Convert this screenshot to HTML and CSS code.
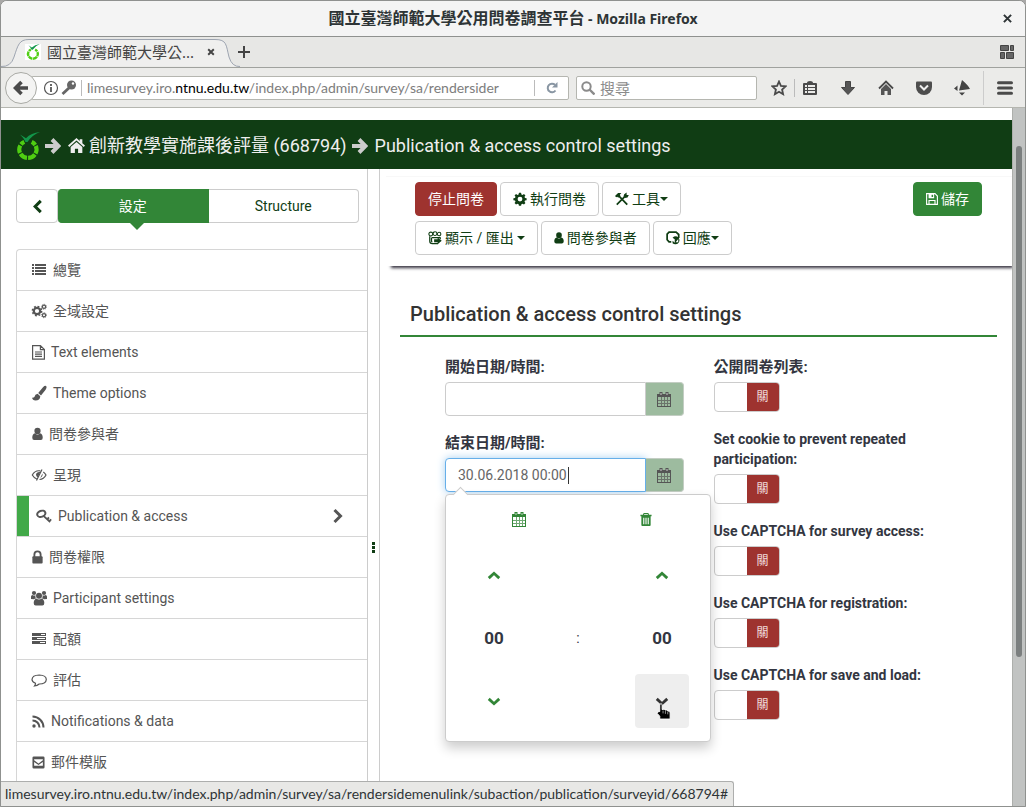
FILE: index.html
```html
<!DOCTYPE html>
<html lang="zh-Hant">
<head>
<meta charset="utf-8">
<meta name="viewport" content="width=device-width, initial-scale=1">
<title>國立臺灣師範大學公用問卷調查平台</title>
<link rel="stylesheet" href="styles.css">
</head>
<body>
<svg class="defs" aria-hidden="true">
  <symbol id="lime" viewBox="0 0 24 28">
    <g fill="none" stroke="#4fce12" stroke-width="4.200">
      <path d="M8.300 9.900A8.600 8.600 0 0 0 5 12.400"/><path d="M4.300 13.400A8.600 8.600 0 0 0 4 20.900"/><path d="M4.600 21.800A8.600 8.600 0 0 0 11 25.800"/><path d="M12.100 25.900A8.600 8.600 0 0 0 18.900 22.400"/><path d="M19.500 21.500A8.600 8.600 0 0 0 19.800 13.900"/><path d="M19.200 13A8.600 8.600 0 0 0 15.700 9.900"/>
    </g>
    <path fill="#12964a" d="M4 2.400L10 6.200Q15 1 24 0 16 3 11.500 10L9.500 10Q8 6 4 2.400Z"/>
  </symbol>
  <symbol id="arrow" viewBox="0 0 16 16"><path fill="none" stroke="currentColor" stroke-width="4" d="M0 8H12M7 1.500L13.500 8L7 14.500"/></symbol>
  <symbol id="home" viewBox="0 0 16 16"><path fill="currentColor" d="M8 1L0 8l1.200 1.300L8 3.400l6.800 5.900L16 8l-2.500-2.200V2H11v1.700zM8 4.800L2.500 9.500V15H6.500v-4h3v4h4V9.500z"/></symbol>
  <symbol id="left" viewBox="0 0 16 16"><path fill="none" stroke="currentColor" stroke-width="3.200" d="M11.500 2L5.500 8l6 6"/></symbol>
  <symbol id="right" viewBox="0 0 16 16"><path fill="none" stroke="currentColor" stroke-width="3" d="M4.500 2L10.500 8l-6 6"/></symbol>
  <symbol id="up" viewBox="0 0 16 16"><path fill="none" stroke="currentColor" stroke-width="3.200" d="M2 11L8 5.500L14 11"/></symbol>
  <symbol id="down" viewBox="0 0 16 16"><path fill="none" stroke="currentColor" stroke-width="3.200" d="M2 5L8 10.500L14 5"/></symbol>
  <symbol id="list" viewBox="0 0 16 16"><path fill="currentColor" d="M1 2h2v2H1zM4 2h11v2H4zM1 5h2v2H1zM4 5h11v2H4zM1 8h2v2H1zM4 8h11v2H4zM1 11h2v2H1zM4 11h11v2H4z"/></symbol>
  <symbol id="cog" viewBox="-1 -1 18 18"><path fill="currentColor" fill-rule="evenodd" d="M6.600 0h2.800l.4 2.100 1.500.6 1.800-1.200 1.900 1.900-1.200 1.800.6 1.500 2.100.4v2.500l-2.100.4-.6 1.500 1.200 1.800-1.900 1.900-1.800-1.200-1.500.6-.4 2H6.600l-.4-2-1.500-.6-1.800 1.200L1 13.300l1.200-1.800L1.600 10-.5 9.600V7.100l2.100-.4.6-1.500L1 3.400l1.900-1.900 1.800 1.200 1.500-.6zM8 5a3 3 0 1 0 0 6.200A3 3 0 0 0 8 5z"/></symbol>
  <symbol id="cogs" viewBox="0 0 16 16"><g fill="none" stroke="currentColor"><circle cx="6" cy="8" r="3.200" stroke-width="2.200"/><circle cx="6" cy="8" r="4.700" stroke-width="1.400" stroke-dasharray="1.900 1.790"/><circle cx="13" cy="3.800" r="1.600" stroke-width="1.200"/><circle cx="13" cy="3.800" r="2.500" stroke-width=".8" stroke-dasharray="1 .96"/><circle cx="13" cy="12.200" r="1.600" stroke-width="1.200"/><circle cx="13" cy="12.200" r="2.500" stroke-width=".8" stroke-dasharray="1 .96"/></g></symbol>
  <symbol id="file" viewBox="1 1 13 15"><path fill="none" stroke="currentColor" stroke-width="1.200" d="M1.600 1.600h7.800l4 4v9.600H1.600zM9.400 1.600v4h4M4 8h7M4 10.200h7M4 12.400h7"/></symbol>
  <symbol id="brush" viewBox="0 0 16 16"><path fill="currentColor" d="M15 1q1.300 1-.4 3.700L10 10.500 7.200 8 12 2.300Q14 .3 15 1zM6.600 8.700l2.700 2.500Q9 15.500 4.500 15.500 1.500 15.300 1 12.500q1 .8 2.400-.5.600-2.800 3.200-3.300z"/></symbol>
  <symbol id="user" viewBox="2 1 12 14"><path fill="currentColor" d="M8 1.200a3.400 3.400 0 1 1 0 6.800 3.400 3.400 0 0 1 0-6.800zM5.200 7.300Q2.300 8 2.300 12q0 2.500 2 2.500h7.400q2 0 2-2.500 0-4-2.900-4.700Q8 10 5.200 7.300z"/></symbol>
  <symbol id="eye" viewBox="0 0 16 16"><path fill="none" stroke="currentColor" stroke-width="1.200" d="M9.300 3.900Q4 3 1.300 8 3 11 5.800 12M12.300 5Q14 6.200 15 8 12.800 12.300 8.500 12.500M11 2.500L5.500 13.500"/><path fill="currentColor" d="M9.300 5Q5.500 4.500 5 7.500 5 9.500 6.800 10.300zM11.500 6.500q.6 3-2.300 4.400z"/></symbol>
  <symbol id="key" viewBox="0 0 16 16"><ellipse cx="5.300" cy="5.800" rx="4.200" ry="3" transform="rotate(-20 5.300 5.800)" fill="none" stroke="currentColor" stroke-width="2"/><path fill="none" stroke="currentColor" stroke-width="1.800" d="M7.500 7.800L14.200 14M10.800 11.500l2.200-2M13 13.400l2.200-2"/></symbol>
  <symbol id="lock" viewBox="2 0 12 15"><path fill="none" stroke="currentColor" stroke-width="2" d="M4.600 8V4.800a3.400 3.400 0 0 1 6.800 0V8"/><rect x="2.400" y="6.800" width="11.200" height="7.700" rx="1" fill="currentColor"/></symbol>
  <symbol id="users" viewBox="0 0 16 16"><g fill="currentColor"><circle cx="3" cy="3" r="2.100"/><circle cx="13" cy="3" r="2.100"/><path d="M0 9V6.500Q.2 5 1.500 5q1.500 1 3 .2Q4 7 5 8.500q-1.500 0-2 .8zM16 9V6.500Q15.800 5 14.500 5q-1.500 1-3 .2.500 1.800-.5 3.300 1.500 0 2 .8z"/><circle cx="8" cy="5.700" r="3"/><path d="M5.200 8.500q2.800 2 5.600 0Q13.300 9.500 13.300 13q0 2.500-2 2.500H4.700q-2 0-2-2.500 0-3.500 2.500-4.500z"/></g></symbol>
  <symbol id="tasks" viewBox="0 0 16 16"><path fill="currentColor" fill-rule="evenodd" d="M1 2h14v3H1zM10 3h4v1h-4zM1 6h14v3H1zM6 7h8v1H6zM1 10h14v3H1zM9 11h5v1H9z"/></symbol>
  <symbol id="chat" viewBox="0 0 16 16"><path fill="none" stroke="currentColor" stroke-width="1.200" d="M8.200 3Q15.300 3.300 15.300 7.500 15 12 8.200 12q-2 1.800-4.700 2 1.200-1.500 1-2.800Q1 10 1 7.500 1.300 3.200 8.200 3z"/></symbol>
  <symbol id="rss" viewBox="1 1 13 14"><circle cx="3" cy="12.500" r="1.700" fill="currentColor"/><path fill="none" stroke="currentColor" stroke-width="2" d="M1.500 7a7 7 0 0 1 7 7M1.500 3a11 11 0 0 1 11 11"/></symbol>
  <symbol id="mail" viewBox="1 1 14 14"><path fill="currentColor" fill-rule="evenodd" d="M3 1.500h10q1.500 0 1.500 1.500v10q0 1.500-1.500 1.500H3q-1.500 0-1.500-1.500V3Q1.500 1.500 3 1.500zM3.300 4.500v1.200L8 9l4.700-3.300V4.500zM3.300 7.500v4h9.400v-4L8 10.700z"/></symbol>
  <symbol id="tools" viewBox="0 0 16 16"><path fill="none" stroke="currentColor" stroke-width="2" d="M3.500 3.500L14 14.500M12 4.500L2 14.500"/><path fill="currentColor" d="M0 4.500L3.500 1h3.800L5.500 3 6.200 4 3.800 6.500 2.500 5.400 1.400 6zM10.500 2.500L13.300.5v2.800l2.500.2-1.500 2.700-3 .6-1.500-2z"/></symbol>
  <symbol id="export" viewBox="0 0 16 16"><path fill="none" stroke="currentColor" stroke-width="1.400" d="M2 6v5.500q0 3 3 3h6.500M4 8v3.500q0 .8 1 .8M4 7.500h10M14 7v2.500"/><g fill="none" stroke="currentColor" stroke-width="1.200"><circle cx="3.200" cy="3.500" r="2.200"/><circle cx="8" cy="3" r="2.200"/><circle cx="12.700" cy="3.500" r="2"/></g><path fill="currentColor" d="M7 9.500h4V7.300l4.700 3.900-4.700 3.900v-2.300H7z"/></symbol>
  <symbol id="answers" viewBox="0 0 16 16"><path fill="none" stroke="currentColor" stroke-width="2" d="M6 12.500H3.500L1.300 10V3.500L3.500 1.300h8L14.500 4v4"/><path fill="currentColor" fill-rule="evenodd" d="M12.500 6.200a4.700 4.700 0 1 1-5 7.800V11l2.500 2.500V9.300L7.500 7.700q2-2 5-1.500zM11 12.800h3V9z"/></symbol>
  <symbol id="save" viewBox="1 1 14 14"><path fill="none" stroke="currentColor" stroke-width="1.300" d="M1.700 1.700h9.800l2.800 2.800v9.800H1.700zM4.500 14V9.700h7V14"/><path fill="currentColor" fill-rule="evenodd" d="M4 2h6.500v5H4zM7.500 3h1.800v2.800H7.500z"/></symbol>
  <symbol id="calendar" viewBox="0 0 14 15"><g fill="currentColor"><path fill-rule="evenodd" d="M0 2h14v13H0zM1 5v9h12V5z"/><path opacity=".7" d="M4 5h1v9H4zM7 5h1v9H7zM10 5h1v9h-1zM1 8h12v1H1zM1 11h12v1H1z"/><path d="M2.500 0h3v3h-3zM8.500 0h3v3h-3z"/></g><path stroke="#fff" opacity=".7" d="M4 1v2M10 1v2"/></symbol>
  <symbol id="trash" viewBox="2 1 12 14"><path fill="currentColor" fill-rule="evenodd" d="M5.500 1h5l.8 2H14v1.500h-1V14q0 1-1 1H4q-1 0-1-1V4.500H2V3h2.700zM6.200 2l-.4 1h4.400l-.4-1zM5 6v7h1.200V6zm2.400 0v7h1.200V6zm2.400 0v7H11V6z"/></symbol>
</svg>

<div class="window">
  <header class="titlebar">
    <h1 class="wtitle"><span class="wtitle-cjk">國立臺灣師範大學公用問卷調查平台</span> - Mozilla Firefox</h1>
    <button class="wclose" aria-label="關閉視窗"><svg viewBox="0 0 10 10"><path stroke="#2e3436" stroke-width="2.200" d="M1 1l8 8M9 1l-8 8"/></svg></button>
  </header>

  <div class="tabstrip">
    <svg class="tabshape" viewBox="0 0 240 31" aria-hidden="true"><path fill="#efefee" stroke="#9da4b0" d="M0 29.500Q10 30 13 20C17 8 18 2.500 28 2.500H214C226 2.500 225 8 228 20Q231 30 239 29.500"/></svg>
    <div class="tab">
      <svg class="favicon"><use href="#lime"/></svg>
      <span class="tabtext">國立臺灣師範大學公...</span>
      <button class="tabclose" aria-label="關閉分頁"><svg viewBox="0 0 10 10"><path stroke="#444" stroke-width="2.400" d="M1.500 1.500l7 7M8.500 1.500l-7 7"/></svg></button>
    </div>
    <button class="newtab" aria-label="新分頁"><svg viewBox="0 0 12 12"><path stroke="#444" stroke-width="2" d="M6 0v12M0 6h12"/></svg></button>
    <svg class="groups" viewBox="0 0 14 14"><path fill="#666" stroke="#444" d="M.5.500h8v5h-8zM10.500.500h3v5h-3zM.5 7.500h4v6h-4zM6.500 7.500h7v6h-7z"/></svg>
  </div>

  <nav class="navbar">
    <button class="back" aria-label="上一頁"><svg viewBox="0 0 16 16"><path fill="none" stroke="#4a4a4a" stroke-width="3.600" d="M15 8H3M8.500 2L2.500 8l6 6"/></svg></button>
    <div class="urlbox">
      <svg class="nav-small" viewBox="0 0 16 16"><circle cx="8" cy="8" r="6.500" fill="none" stroke="#555" stroke-width="1.200"/><path stroke="#555" stroke-width="1.800" d="M8 7v5M8 4v2"/></svg>
      <svg class="nav-small" viewBox="0 0 16 16"><circle cx="10.500" cy="5" r="4.500" fill="#666"/><circle cx="12" cy="3.500" r="1.200" fill="#fff"/><path stroke="#666" stroke-width="2.800" d="M9 7l-7.500 7"/></svg>
      <span class="url">limesurvey.iro.<b>ntnu.edu.tw</b>/index.php/admin/survey/sa/rendersider</span>
      <button class="reload" aria-label="重新載入"><svg viewBox="0 0 12 12"><path fill="none" stroke="#8996a3" stroke-width="2" d="M9.500 8.500A4.300 4.300 0 1 1 9 2.800"/><path fill="#8996a3" d="M11.500 0v5.500H6z"/></svg></button>
    </div>
    <label class="searchbox"><svg viewBox="0 0 14 14"><circle cx="5.500" cy="5.500" r="4.200" fill="none" stroke="#8b8b8b" stroke-width="2"/><path stroke="#8b8b8b" stroke-width="2.400" d="M8.500 8.500l5 5"/></svg><input type="search" placeholder="搜尋" aria-label="搜尋"></label>
    <div class="navicons">
      <button aria-label="書籤"><svg viewBox="0 0 16 16"><path fill="none" stroke="#4a4a4a" stroke-width="1.800" d="M8 1.500l1.900 4.300 4.700.5-3.500 3.200 1 4.700L8 11.800l-4.100 2.400 1-4.700L1.400 6.300l4.700-.5z"/></svg></button>
      <button class="ruled" aria-label="書籤選單"><svg viewBox="0 0 16 16"><path fill="#4a4a4a" fill-rule="evenodd" d="M5 3q0-2 3-2t3 2h3q1 0 1 1v10q0 1-1 1H2q-1 0-1-1V4q0-1 1-1zM3 5v2h2V5zm3 0v2h7V5zM3 8v2h2V8zm3 0v2h7V8zm-3 3v2h2v-2zm3 0v2h7v-2z"/></svg></button>
      <button aria-label="下載"><svg viewBox="0 0 16 16"><path fill="#555" stroke="#444" d="M5.500 1.500h5v6h4L8 14.500 1.500 7.500h4z"/></svg></button>
      <button aria-label="首頁"><svg viewBox="0 0 16 16"><path fill="none" stroke="#4a4a4a" stroke-width="1.800" d="M1 8.500l7-7 7 7"/><path fill="#555" d="M3 9l5-5 5 5v6H9.500v-4h-3v4H3z"/></svg></button>
      <button aria-label="Pocket"><svg viewBox="0 0 16 16"><path fill="#4d4d4d" d="M1 1.500h14q1 0 1 1V7a8 8 0 0 1-16 0V2.500q0-1 1-1z"/><path fill="none" stroke="#eee" stroke-width="2" d="M4 5.500l4 4 4-4"/></svg></button>
      <button aria-label="擴充套件"><svg viewBox="0 0 16 16"><path fill="#444" d="M8 0L5 10.500 16 9Q14 5 8 0zM3.500 5.500v5.500L0 8.500zM5 12.500h6l-3 3z"/></svg></button>
      <button class="menu" aria-label="選單"><svg viewBox="0 0 16 14"><path stroke="#4a4a4a" stroke-width="3" stroke-linecap="round" d="M1.500 1.800h13M1.500 7h13M1.500 12.200h13"/></svg></button>
    </div>
  </nav>

  <div class="viewport">
    <div class="page">
      <div class="crumbs">
        <svg class="logo"><use href="#lime"/></svg>
        <svg class="crumb-arrow"><use href="#arrow"/></svg>
        <a href="#" class="crumb"><svg><use href="#home"/></svg>創新教學實施課後評量 (668794)</a>
        <svg class="crumb-arrow"><use href="#arrow"/></svg>
        <span class="crumb">Publication &amp; access control settings</span>
      </div>

      <div class="content">
        <aside class="sidebar">
          <div class="sidetabs">
            <button class="collapse" aria-label="收合"><svg class="ic"><use href="#left"/></svg></button>
            <div class="pair"><button class="on">設定</button><button>Structure</button></div>
          </div>
          <ul class="menu-list">
            <li><a href="#"><svg class="ic"><use href="#list"/></svg>總覽</a></li>
            <li><a href="#"><svg class="ic"><use href="#cogs"/></svg>全域設定</a></li>
            <li><a href="#"><svg class="ic n"><use href="#file"/></svg>Text elements</a></li>
            <li><a href="#"><svg class="ic"><use href="#brush"/></svg>Theme options</a></li>
            <li><a href="#"><svg class="ic xn"><use href="#user"/></svg>問卷參與者</a></li>
            <li><a href="#"><svg class="ic"><use href="#eye"/></svg>呈現</a></li>
            <li><a href="#" class="current"><svg class="ic"><use href="#key"/></svg>Publication &amp; access<svg class="ic chev"><use href="#right"/></svg></a></li>
            <li><a href="#"><svg class="ic xn"><use href="#lock"/></svg>問卷權限</a></li>
            <li><a href="#"><svg class="ic"><use href="#users"/></svg>Participant settings</a></li>
            <li><a href="#"><svg class="ic"><use href="#tasks"/></svg>配額</a></li>
            <li><a href="#"><svg class="ic"><use href="#chat"/></svg>評估</a></li>
            <li><a href="#"><svg class="ic n"><use href="#rss"/></svg>Notifications &amp; data</a></li>
            <li><a href="#"><svg class="ic n"><use href="#mail"/></svg>郵件模版</a></li>
          </ul>
        </aside>
        <div class="splitter"><i></i><i></i><i></i></div>

        <main class="main">
          <div class="actions">
            <div class="btns">
              <button class="btn danger">停止問卷</button>
              <button class="btn"><svg class="ic"><use href="#cog"/></svg>執行問卷</button>
              <button class="btn"><svg class="ic"><use href="#tools"/></svg>工具<i class="caret"></i></button>
              <button class="btn"><svg class="ic"><use href="#export"/></svg>顯示 / 匯出<i class="caret spaced"></i></button>
              <button class="btn"><svg class="ic person"><use href="#user"/></svg>問卷參與者</button>
              <button class="btn"><svg class="ic"><use href="#answers"/></svg>回應<i class="caret"></i></button>
            </div>
            <button class="btn success"><svg class="ic disk"><use href="#save"/></svg>儲存</button>
          </div>

          <section class="settings">
            <h2>Publication &amp; access control settings</h2>
            <form class="cols">
              <div class="col">
                <div class="field">
                  <label class="cjk" for="start">開始日期/時間:</label>
                  <div class="date"><input id="start" type="text"><button type="button" aria-label="選擇開始日期"><svg><use href="#calendar"/></svg></button></div>
                </div>
                <div class="field">
                  <label class="cjk" for="end">結束日期/時間:</label>
                  <div class="date active"><input id="end" type="text" value="30.06.2018 00:00"><span class="textcaret"></span><button type="button" aria-label="選擇結束日期"><svg><use href="#calendar"/></svg></button>
                    <div class="picker">
                      <div class="picker-top"><button type="button" aria-label="日曆"><svg><use href="#calendar"/></svg></button><button type="button" aria-label="清除"><svg class="trash"><use href="#trash"/></svg></button></div>
                      <div class="clock">
                        <button type="button" aria-label="增加小時"><svg><use href="#up"/></svg></button><span></span><button type="button" aria-label="增加分鐘"><svg><use href="#up"/></svg></button>
                        <b>00</b><span>:</span><b>00</b>
                        <button type="button" aria-label="減少小時"><svg><use href="#down"/></svg></button><span></span><button type="button" class="hover" aria-label="減少分鐘"><svg><use href="#down"/></svg>
                          <svg class="hand" viewBox="0 0 16 18"><path fill="#000" stroke="#fff" d="M3.500 9V1.500q1.500-1.500 2.500 0V7l2-.5 1 1 2-.2 1 1.200 2 .3.500 1.700v6.500h-11V14L.8 11Q.3 9 3.500 9z"/><path stroke="#bbb" stroke-width=".8" d="M7 8v3M9.500 8.500v3M12 9v3"/></svg></button>
                      </div>
                    </div>
                  </div>
                </div>
              </div>
              <div class="col">
                <div class="field"><label class="cjk" for="s1">公開問卷列表:</label><span class="switch"><input id="s1" type="checkbox"><span>關</span></span></div>
                <div class="field"><label for="s2">Set cookie to prevent repeated participation:</label><span class="switch"><input id="s2" type="checkbox"><span>關</span></span></div>
                <div class="field"><label for="s3">Use CAPTCHA for survey access:</label><span class="switch"><input id="s3" type="checkbox"><span>關</span></span></div>
                <div class="field"><label for="s4">Use CAPTCHA for registration:</label><span class="switch"><input id="s4" type="checkbox"><span>關</span></span></div>
                <div class="field"><label for="s5">Use CAPTCHA for save and load:</label><span class="switch"><input id="s5" type="checkbox"><span>關</span></span></div>
              </div>
            </form>
          </section>
        </main>
      </div>
    </div>
    <div class="scrollbar"><div class="thumb"></div></div>
    <div class="status">limesurvey.iro.ntnu.edu.tw/index.php/admin/survey/sa/rendersidemenulink/subaction/publication/surveyid/668794#</div>
  </div>
</div>
</body>
</html>
```

FILE: styles.css
```css
* { box-sizing: border-box; }
body {
  margin: 0;
  height: 100vh;
  overflow: hidden;
  background: #a9a8a7;
  font: 14px/20px Roboto, "Noto Sans CJK TC", sans-serif;
  color: #333641;
}
button { font: inherit; color: inherit; background: none; border: 0; padding: 0; margin: 0; cursor: pointer; }
a { color: inherit; text-decoration: none; }
svg { display: block; flex: none; }
.defs { position: absolute; width: 0; height: 0; }
.ic { width: 16px; height: 16px; }

.window { height: 100%; display: flex; flex-direction: column; border: 1px solid #8f918f; border-radius: 7px 7px 0 0; overflow: hidden; background: #fff; }

.titlebar { height: 36px; flex: none; display: flex; align-items: center; justify-content: center; position: relative; background: #f4f4f4; border-bottom: 1px solid #8f918f; }
.wtitle { margin: 0; font: bold 14px/20px "Noto Sans", "Noto Sans CJK TC", sans-serif; color: #2e3436; white-space: pre; }
.wtitle-cjk { font-size: 16px; }
.wclose { position: absolute; right: 13px; top: 13px; }
.wclose svg { width: 9px; height: 9px; }

.tabstrip { height: 31px; flex: none; position: relative; display: flex; align-items: center; background: #e7e7e5; border-bottom: 1px solid #a0a29e; padding-right: 11px; }
.tabshape { position: absolute; left: 0; top: 0; width: 240px; height: 31px; }
.tab { position: relative; width: 228px; display: flex; align-items: center; padding: 0 14px 0 24px; gap: 6px; font: 15px/20px "Noto Sans", "Noto Sans CJK TC", sans-serif; color: #444; }
.favicon { width: 16px; height: 16px; background: #fff; }
.tabtext { flex: 1; white-space: nowrap; }
.tabclose svg { width: 8px; height: 8px; }
.newtab { position: relative; margin-left: 9px; }
.newtab svg { width: 12px; height: 12px; }
.groups { width: 14px; height: 14px; margin-left: auto; }

.navbar { height: 40px; flex: none; display: flex; align-items: center; padding: 0 12px 0 4px; background: #ebebe9; border-bottom: 1px solid #b5b6b0; font: 14px/20px Lato, "Noto Sans CJK TC", sans-serif; }
.back { width: 32px; height: 32px; border: 1px solid #a9aaa5; border-radius: 50%; background: #f4f4f3; display: grid; place-items: center; position: relative; z-index: 1; flex: none; }
.back svg { width: 16px; height: 16px; }
.urlbox { flex: 1; min-width: 0; height: 24px; margin-left: -6px; display: flex; align-items: center; gap: 2px; padding-left: 11px; background: #fff; border: 1px solid #b5b6b0; border-radius: 2px; }
.nav-small { width: 16px; height: 16px; }
.url { flex: 1; white-space: nowrap; border-left: 1px solid #bbb; padding-left: 5px; margin-left: 2px; line-height: 16px; color: #7d7d7d; }
.url b { font-weight: normal; color: #000; }
.reload { width: 34px; height: 16px; border-left: 1px solid #bbb; display: grid; place-items: center; }
.reload svg { width: 12px; height: 12px; }
.searchbox { width: 181px; height: 24px; margin-left: 7px; display: flex; align-items: center; gap: 5px; padding: 0 4px; background: #fff; border: 1px solid #b5b6b0; border-radius: 2px; }
.searchbox svg { width: 14px; height: 14px; }
.searchbox input { flex: 1; min-width: 0; border: 0; outline: 0; padding: 0; font: 15px/20px "Noto Sans CJK TC", sans-serif; }
.searchbox input::placeholder { color: #8b8b8b; opacity: 1; }
.navicons { display: flex; align-items: center; margin-left: 14px; gap: 22px; }
.navicons svg { width: 16px; height: 16px; }
.navicons .ruled { margin-left: -15px; border-left: 1px solid #bbb; padding: 1px 0 1px 7px; }
.navicons .menu { margin-left: -9px; padding: 9px 0 9px 13px; border-left: 1px solid #ccc; }

.viewport { flex: 1; min-height: 0; display: flex; position: relative; }
.page { flex: 1; min-width: 0; display: flex; flex-direction: column; padding-top: 12px; overflow: hidden; }
.scrollbar { width: 13px; background: #c1c3c2; border-left: 1px solid #adafac; padding: 38px 3px 0; }
.thumb { height: 80%; max-height: 511px; background: #7b7f7f; border-radius: 3px; }
.status { position: absolute; left: 0; bottom: 0; height: 25px; padding: 0 5px 0 4px; font: 14px/24px Lato, sans-serif; white-space: nowrap; color: #2e3436; background: #e8e8e6; border: 1px solid #adaead; border-width: 1px 1px 0 0; border-radius: 0 3px 0 0; }

.crumbs { flex: none; height: 49px; display: flex; align-items: center; padding: 2px 15px 0; background: #103d14; color: #eee; font-size: 18px; line-height: 24px; white-space: nowrap; }
.crumbs .logo { width: 24px; height: 28px; }
.crumb-arrow { width: 16px; height: 16px; color: #ccc; margin: 0 7px 0 5px; }
.crumb { display: flex; align-items: center; gap: 4px; }
.crumb svg { width: 17px; height: 17px; }

.content { flex: 1; min-height: 0; display: flex; }
.sidebar { width: 367px; flex: none; padding: 20px 0 0 15px; border-right: 1px solid #ccc; }
.sidetabs { display: flex; padding-right: 8px; }
.sidetabs button { height: 34px; border: 1px solid #ccc; color: #103d14; }
.collapse { width: 42px; border-radius: 4px; display: grid; place-items: center; }
.collapse svg { width: 15px; height: 15px; }
.pair { flex: 1; display: grid; grid-template-columns: 1fr 1fr; }
.pair button { border-radius: 0 4px 4px 0; border-left: 0; }
.pair button.on { position: relative; background: #328637; border-color: #328637; color: #fff; border-radius: 4px 0 0 4px; }
.pair .on::after { content: ""; position: absolute; left: 50%; top: 100%; margin-left: -4px; border: 8px solid transparent; border-top-color: #328637; border-bottom: 0; }
.menu-list { list-style: none; margin: 26px 0 0; padding: 0; border: 1px solid #d6d6d6; border-width: 1px 0 0 1px; border-radius: 4px 0 0 0; color: #555; }
.menu-list li { border-bottom: 1px solid #d6d6d6; }
.menu-list a { height: 40px; display: flex; align-items: center; gap: 6px; padding: 0 21px 0 14px; }
.menu-list .n { width: 13px; height: 15px; margin-left: 1px; }
.menu-list .xn { width: 11px; height: 14px; margin-left: 1px; }
.menu-list a.current { border-left: 12px solid #41a948; padding-left: 7px; }
.menu-list a .chev { margin-left: auto; color: #555; }
.splitter { width: 12px; flex: none; border-right: 1px solid #ccc; padding-top: 373px; display: flex; flex-direction: column; align-items: center; gap: 1px; }
.splitter i { width: 3px; height: 3px; background: #103d14; }

.main { flex: 1; min-width: 0; }
.actions { margin: 7px 0 0 6px; padding: 5px 30px 11px 29px; display: flex; justify-content: space-between; align-items: flex-start; border-top: 1px solid #f8f8f8; box-shadow: 3px 4px 3px -2px #35323f; }
.btns { display: flex; flex-wrap: wrap; gap: 5px 3px; width: 68%; }
.btn { height: 34px; padding: 0 12px; display: flex; align-items: center; gap: 3px; border: 1px solid #ccc; border-radius: 4px; background: #fff; color: #103d14; white-space: nowrap; }
.btn .ic { width: 14px; height: 14px; }
.btn .person { width: 10px; height: 12px; }
.btn .disk { width: 12px; height: 12px; }
.danger { background: #9e332f; border-color: #9e332f; color: #fff; }
.success { background: #328637; border-color: #328637; color: #fff; }
.caret { border: 4px solid transparent; border-top-color: currentColor; border-bottom: 0; margin-left: -3px; }
.caret.spaced { margin-left: 0; }

.settings { margin: 36px 15px 0 20px; }
.settings h2 { margin: 0 0 20px; padding: 0 10px 9px; font-size: 20px; line-height: 24px; font-weight: 500; color: #333; border-bottom: 2px solid #328637; }
.cols { display: grid; grid-template-columns: repeat(2, minmax(0, 1fr)); gap: 30px; padding: 0 45px; }
.col { display: flex; flex-direction: column; gap: 17px; }
.field { display: flex; flex-direction: column; gap: 5px; align-items: flex-start; }
.field label { font-weight: bold; }
.field label.cjk { font-size: 15px; }
.date { position: relative; display: flex; width: 100%; height: 34px; }
.date > input { flex: 1; min-width: 0; border: 1px solid #ccc; border-radius: 4px 0 0 4px; padding: 0 12px; font: inherit; color: #666; outline: 0; background: #fff; }
.date.active > input { border-color: #66afe9; box-shadow: 0 0 8px #a5cff0; }
.date > button { width: 38px; background: #9dbb9f; border: 1px solid #c3cdc3; border-left: 0; border-radius: 0 4px 4px 0; display: grid; place-items: center; color: #555; position: relative; z-index: 1; }
.date > button svg { width: 14px; height: 15px; }
.textcaret { position: absolute; left: 123px; top: 9px; width: 1px; height: 17px; background: #333; }
.picker { position: absolute; z-index: 3; left: 0; top: 36px; width: 266px; padding: 0 6px 8px; background: #fff; border: 1px solid #ccc; border-radius: 4px; box-shadow: 0 6px 12px rgba(0,0,0,.2); color: #328637; }
.picker::before { content: ""; position: absolute; left: 9px; top: -6px; width: 10px; height: 10px; background: #fff; border: 1px solid #ccc; border-width: 1px 0 0 1px; transform: rotate(45deg); }
.picker-top { display: grid; grid-template-columns: 1fr 1fr; height: 48px; margin: 0 -6px 0 3px; }
.picker-top button { display: grid; place-items: center; }
.picker svg { width: 14px; height: 15px; }
.picker svg.trash { width: 12px; height: 13px; }
.clock { display: grid; grid-template-columns: 1fr 1fr 1fr; grid-template-rows: 64px 62px 64px; place-items: center; }
.clock button { width: 54px; height: 54px; display: grid; place-items: center; border-radius: 4px; }
.clock b { font-size: 17px; color: #333641; }
.clock span { color: #333641; }
.clock .hover { position: relative; background: #eee; color: #333; }
.clock .hover .hand { position: absolute; left: 21px; top: 29px; width: 16px; height: 17px; }
.switch { position: relative; width: 66px; height: 30px; display: flex; border: 1px solid #ccc; border-radius: 4px; overflow: hidden; background: #fff; }
.switch input { position: absolute; inset: 0; width: 100%; height: 100%; margin: 0; opacity: 0; }
.switch span { margin-left: auto; width: 32px; background: #9e332f; color: #f2dede; font-size: 12px; line-height: 28px; text-align: center; }
```
